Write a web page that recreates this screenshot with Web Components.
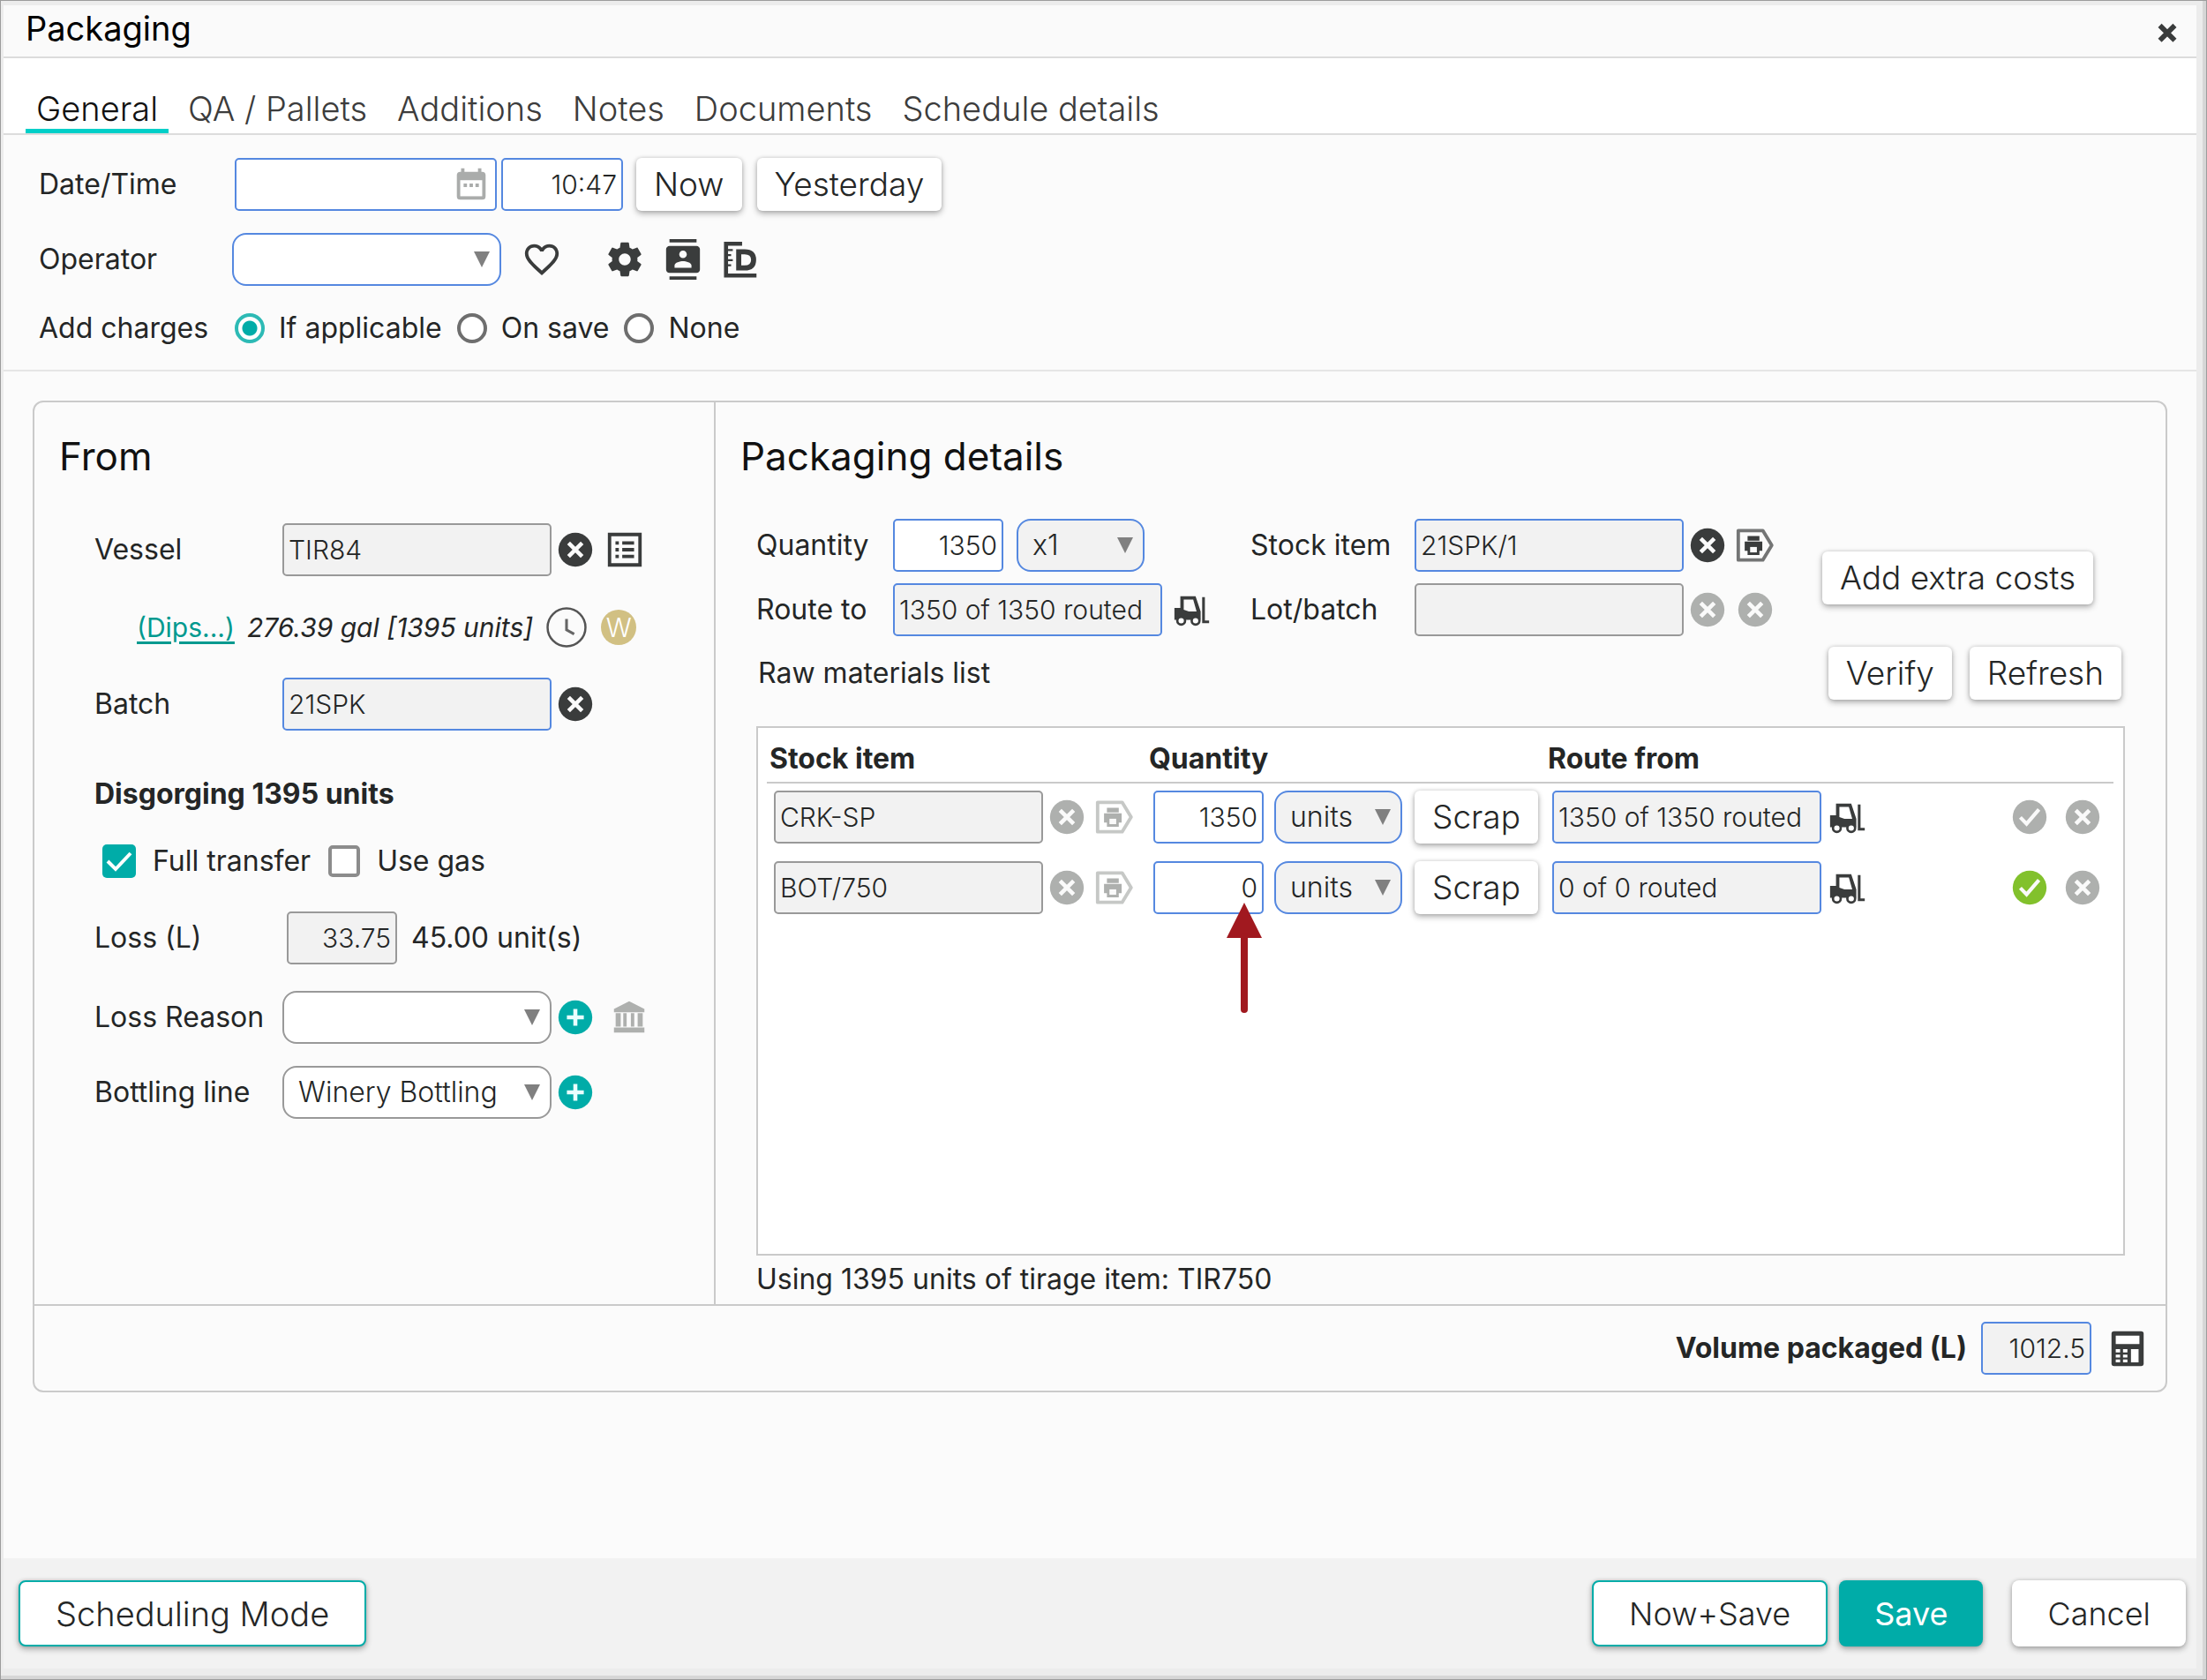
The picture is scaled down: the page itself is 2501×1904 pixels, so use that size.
<!DOCTYPE html>
<html lang="en">
<head>
<meta charset="utf-8">
<title>Packaging</title>
<style>
html, body { margin: 0; height: 100%; }
body { font-family: Inter, "Open Sans", sans-serif; font-size: 32px; line-height: 36px; color: #242626; background: #fbfbfb; }
</style>
</head>
<body>
<packaging-dialog></packaging-dialog>

<template id="t-dialog">
<style>
:host { display: flex; flex-direction: column; box-sizing: border-box; min-height: 100vh; border: 1px solid #9c9c9c; background: #ececec; padding: 5px 11px 12px 3px;
  box-shadow: inset -4px -4px 0 #d6d6d6; }
main { flex: 1; display: flex; flex-direction: column; background: #fbfbfb; }
header { display: flex; align-items: center; justify-content: space-between; height: 58px; padding: 0 10px 0 25px; background: #fafafa; border-bottom: 2px solid #dcdcdc; }
h1 { margin: 0; font-size: 38px; line-height: 44px; font-weight: 400; color: #000; padding-bottom: 6px; }
.top { display: flex; flex-direction: column; padding: 26px 40px 29px; border-bottom: 2px solid #e6e6e6; }
.row { display: flex; align-items: center; }
.g4 { gap: 4px; }
.box { margin: 33px 33px 0; border: 2px solid #cacaca; border-radius: 12px; }
.cols { display: grid; grid-template-columns: 772px 1fr; }
h2 { margin: 0; font-size: 44px; line-height: 48px; font-weight: 400; color: #111; }
.from { padding: 37px 0 0 28px; border-right: 2px solid #cacaca; }
.from .rows { padding: 52px 0 0 40px; display: flex; flex-direction: column; }
.dips { padding: 35px 0 34px 48px; display: flex; align-items: center; height: 46px; font-size: 30px; }
a { color: #00998f; text-decoration-thickness: 3px; text-underline-offset: 5px; }
i { margin: 0 15px 0 14px; }
.w { display: grid; place-items: center; width: 40px; height: 40px; margin-left: 16px; border-radius: 50%; background: #d1c083; color: #fff; font-weight: 300; }
h3 { margin: 0; font-size: 32px; line-height: 36px; font-weight: 700; }
.details { padding: 37px 46px 10px; }
.details h2 { margin-left: -18px; }
.grid { display: flex; gap: 43px; padding: 47px 0 12px; }
.stack { display: flex; flex-direction: column; gap: 13px; }
.raw { display: flex; justify-content: space-between; align-items: center; padding: 0 4px 30px 2px; }
.using { margin: 9px 0 0; }
.total { display: flex; align-items: center; justify-content: flex-end; gap: 18px; border-top: 2px solid #cacaca; padding: 18px 20px 18px 0; }
footer { display: flex; align-items: center; gap: 13px; height: 125px; margin-top: 188px; padding: 0 12px 0 17px; background: #f2f2f2; }
footer .push { margin-left: auto; }
.sp { width: 7px; }
.close { border: 0; background: none; padding: 0; height: 46px; }
</style>
<main>
  <header><h1>Packaging</h1><button class="close" aria-label="Close"><ui-icon name="close"></ui-icon></button></header>
  <tab-bar></tab-bar>
  <section class="top">
    <div class="row">
      <ui-field label="Date/Time" lw="222" w="297" icon="calendar"></ui-field>
      <ui-field aria="Time" value="10:47" w="138" right style="margin-left:5px"></ui-field>
      <ui-button style="margin-left:15px">Now</ui-button>
      <ui-button style="margin-left:17px">Yesterday</ui-button>
    </div>
    <div class="row" style="margin-top:25px">
      <ui-select label="Operator" lw="219" w="305"></ui-select>
      <ui-icon name="heart" style="margin-left:23px"></ui-icon>
      <ui-icon name="gear" style="margin-left:48px"></ui-icon>
      <ui-icon name="contacts" style="margin-left:20px"></ui-icon>
      <ui-icon name="ruler" style="margin-left:20px"></ui-icon>
    </div>
    <charge-options></charge-options>
  </section>
  <section class="box">
    <div class="cols">
      <div class="from">
        <h2>From</h2>
        <div class="rows">
          <div class="row g4"><ui-field label="Vessel" lw="213" w="305" value="TIR84" grey fill></ui-field><ui-icon name="cancel"></ui-icon><ui-icon name="list" style="margin-left:6px"></ui-icon></div>
          <div class="dips"><a href="#dips">(Dips...)</a><i>276.39 gal [1395 units]</i><ui-icon name="clock"></ui-icon><span class="w">W</span></div>
          <div class="row g4"><ui-field label="Batch" lw="213" w="305" value="21SPK" fill></ui-field><ui-icon name="cancel"></ui-icon></div>
          <h3 style="padding-top:54px">Disgorging 1395 units</h3>
          <div class="row" style="padding:39px 0 38px 9px"><ui-check label="Full transfer" checked></ui-check><ui-check label="Use gas" style="margin-left:20px"></ui-check></div>
          <div class="row" style="gap:16px"><ui-field label="Loss (L)" lw="218" w="125" value="33.75" grey fill right></ui-field><span>45.00 unit(s)</span></div>
          <div class="row g4" style="padding:30px 0 25px"><ui-select label="Loss Reason" lw="213" w="305" grey></ui-select><ui-icon name="plus"></ui-icon><ui-icon name="bank" tone="off" style="margin-left:11px"></ui-icon></div>
          <div class="row g4"><ui-select label="Bottling line" lw="213" w="305" value="Winery Bottling" grey></ui-select><ui-icon name="plus"></ui-icon></div>
        </div>
      </div>
      <div class="details">
        <h2>Packaging details</h2>
        <div class="grid">
          <div class="stack">
            <div class="row" style="gap:15px"><ui-field label="Quantity" lw="155" w="125" value="1350" right></ui-field><ui-select aria="Multiplier" w="145" value="x1" fill></ui-select></div>
            <div class="row" style="gap:11px"><ui-field label="Route to" lw="155" w="305" value="1350 of 1350 routed" fill></ui-field><ui-icon name="forklift"></ui-icon></div>
          </div>
          <div class="stack">
            <div class="row g4"><ui-field label="Stock item" lw="186" w="305" value="21SPK/1" fill></ui-field><ui-icon name="cancel"></ui-icon><ui-icon name="tag" style="margin-left:4px"></ui-icon></div>
            <div class="row g4"><ui-field label="Lot/batch" lw="186" w="305" grey fill></ui-field><ui-icon name="cancel" tone="off"></ui-icon><ui-icon name="cancel" tone="off" style="margin-left:4px"></ui-icon></div>
          </div>
          <div class="row" style="padding-left:10px"><ui-button>Add extra costs</ui-button></div>
        </div>
        <div class="raw"><span>Raw materials list</span><div class="row" style="gap:20px"><ui-button>Verify</ui-button><ui-button>Refresh</ui-button></div></div>
        <materials-table></materials-table>
        <p class="using">Using 1395 units of tirage item: TIR750</p>
      </div>
    </div>
    <div class="total"><ui-field label="Volume packaged (L)" bold w="125" gap="16" value="1012.5" right fill></ui-field><ui-icon name="calculator"></ui-icon></div>
  </section>
  <footer>
    <ui-button kind="outline" wide>Scheduling Mode</ui-button>
    <ui-button kind="outline" class="push">Now+Save</ui-button>
    <ui-button kind="primary">Save</ui-button>
    <span class="sp"></span>
    <ui-button kind="large">Cancel</ui-button>
  </footer>
</main>
</template>

<script>
const INK = '#3a3c3c', OFF = '#aeb0ae';
const ICONS = {
  close: '<path d="M7.600 8.800l8.800 8.800M16.400 8.800l-8.800 8.800" stroke="currentColor" stroke-width="3"/>',
  calendar: '<path fill="#aaacab" d="M6 2.500h2v2h8v-2h2v2h.5a2 2 0 0 1 2 2V19a2 2 0 0 1-2 2h-13a2 2 0 0 1-2-2V6.500a2 2 0 0 1 2-2H6z"/><path fill="#fff" d="M5.500 9.500h13V19h-13z"/><path fill="#aaacab" d="M7.500 11.500h2v2h-2zM11 11.500h2v2h-2zM14.500 11.500h2v2h-2z"/>',
  heart: '<path fill="currentColor" d="M16.500 3c-1.740 0-3.410.810-4.500 2.090C10.910 3.810 9.240 3 7.500 3 4.420 3 2 5.420 2 8.500c0 3.780 3.400 6.860 8.550 11.540L12 21.350l1.450-1.320C18.600 15.360 22 12.280 22 8.500 22 5.420 19.580 3 16.500 3zm-4.400 15.550l-.1.1-.1-.1C7.140 14.240 4 11.390 4 8.500 4 6.500 5.500 5 7.500 5c1.540 0 3.040.990 3.570 2.360h1.870C13.460 5.990 14.960 5 16.500 5c2 0 3.500 1.500 3.500 3.500 0 2.890-3.140 5.740-7.900 10.050z"/>',
  gear: '<path fill="currentColor" d="M19.430 12.980c.04-.32.07-.64.07-.98s-.03-.66-.07-.98l2.110-1.650c.19-.15.24-.42.12-.64l-2-3.460c-.12-.22-.39-.3-.61-.22l-2.490 1c-.52-.4-1.080-.73-1.690-.98l-.38-2.650C14.460 2.180 14.250 2 14 2h-4c-.25 0-.46.18-.49.42l-.38 2.650c-.61.25-1.170.59-1.690.98l-2.490-1c-.23-.09-.49 0-.61.22l-2 3.460c-.13.22-.07.49.12.64l2.110 1.650c-.04.32-.07.65-.07.98s.03.66.07.98l-2.110 1.650c-.19.15-.24.42-.12.64l2 3.460c.12.22.39.3.61.22l2.490-1c.52.4 1.080.73 1.690.98l.38 2.650c.03.24.24.42.49.42h4c.25 0 .46-.18.49-.42l.38-2.650c.61-.25 1.170-.59 1.690-.98l2.490 1c.23.09.49 0 .61-.22l2-3.460c.12-.22.07-.49-.12-.64l-2.110-1.650zM12 15.500c-1.930 0-3.500-1.570-3.500-3.500s1.570-3.500 3.500-3.500 3.500 1.570 3.500 3.500-1.570 3.500-3.500 3.500z"/>',
  contacts: '<path fill="currentColor" d="M20 0H4v2h16V0zM4 24h16v-2H4v2zM20 4H4c-1.100 0-2 .9-2 2v12c0 1.100.9 2 2 2h16c1.100 0 2-.9 2-2V6c0-1.100-.9-2-2-2zm-8 2.750c1.240 0 2.250 1.010 2.250 2.250s-1.010 2.250-2.250 2.250S9.750 10.240 9.750 9 10.760 6.750 12 6.750zM17 17H7v-1.500c0-1.670 3.330-2.500 5-2.500s5 .83 5 2.500V17z"/>',
  ruler: '<path fill="none" stroke="currentColor" stroke-width="2.400" d="M12.500 2.700H3v18.800h18"/><path fill="none" stroke="currentColor" stroke-width="1.200" d="M4 6.500h3M4 9.500h2M4 12.500h3M4 15.500h2"/><path fill="none" stroke="currentColor" stroke-width="3" d="M10.500 7.500H14c3.200 0 5.300 1.300 5.300 4.700S17.200 17 14 17h-3.500z"/>',
  cancel: '<circle cx="12" cy="12" r="10" fill="currentColor"/><path d="M8 8l8 8M16 8l-8 8" stroke="#fafafa" stroke-width="2.400"/>',
  check: '<circle cx="12" cy="12" r="10" fill="currentColor"/><path d="M6.500 12.200l3.700 3.800 7.300-8.500" fill="none" stroke="#fafafa" stroke-width="2.200"/>',
  plus: '<circle cx="12" cy="12" r="10" fill="#00aca8"/><path d="M12 7v10M7 12h10" stroke="#e9fffe" stroke-width="2.400"/>',
  list: '<path fill="none" stroke="currentColor" stroke-width="2" d="M3 3h18v18H3z"/><path stroke="currentColor" stroke-width="2" d="M6.500 8h2M6.500 12h2M6.500 16h2M10.500 8h7M10.500 12h7M10.500 16h7"/>',
  clock: '<circle cx="12" cy="12" r="11.200" fill="none" stroke="#555" stroke-width="1.300"/><path fill="none" stroke="#666" stroke-width="1.600" d="M12 7v6.500l4.500 2.500"/>',
  bank: '<path fill="currentColor" d="M4 9.500h3v8H4zM8.500 9.500h2v8h-2zM13 9.500h2v8h-2zM17 9.500h3v8h-3zM3 18h18v3H3zM12 2.500L3 7v2h18V7z"/>',
  forklift: '<path fill="currentColor" fill-rule="evenodd" d="M5 11V4h9l3 9v5H1.500v-7zm2-5v6l3 1h4.600L12.600 6z"/><circle cx="5.500" cy="18.500" r="2.300" fill="#fff" stroke="currentColor" stroke-width="1.400"/><circle cx="14" cy="18.500" r="2.300" fill="#fff" stroke="currentColor" stroke-width="1.400"/><path fill="none" stroke="currentColor" stroke-width="1.600" d="M18.700 4.500v14.700H22"/>',
  tag: '<path fill="none" stroke="currentColor" stroke-opacity=".7" stroke-width="2" stroke-linejoin="round" d="M2 3.300h14.500l5.300 8.700-5.300 8.700H2z"/><path fill="currentColor" d="M7.500 6.500h7v2.700h-7zM5.800 9.800h10.400v5.400h-1.700v2.500h-7v-2.500H5.800z"/><path fill="#fafafa" d="M9 13h4v3.200H9z"/>',
  calculator: '<rect x="2.500" y="2" width="19" height="20.500" rx="1.500" fill="currentColor"/><path fill="#fff" d="M5 4.500h14v5H5zM5 12.500h2.600v2H5zM9.300 12.500h2.600v2H9.300zM5 15.800h2.600v1.700H5zM9.300 15.800h2.600v1.700H9.300zM5 18.700h2.600v1.600H5zM9.300 18.700h2.600v1.600H9.300zM14 12.500h4.500v7.800H14z"/>'
};
const make = (host, css, html) => { host.attachShadow({ mode: 'open' }).innerHTML = `<style>${css}</style>${html}`; };
const attr = (el, n, d = '') => el.getAttribute(n) ?? d;

customElements.define('ui-icon', class extends HTMLElement {
  connectedCallback() {
    const tone = { off: OFF, good: '#82c12c' }[attr(this, 'tone')] || INK;
    make(this, `:host{display:block;flex:none;width:46px;height:46px;color:${tone}} svg{display:block;width:46px;height:46px}`,
      `<svg viewBox="0 0 24 24" aria-hidden="true">${ICONS[attr(this, 'name')]}</svg>`);
  }
});

customElements.define('ui-button', class extends HTMLElement {
  connectedCallback() {
    make(this, `
      :host{display:block;flex:none}
      button{display:block;box-sizing:border-box;height:60px;padding:0 20px;border:0;border-radius:6px;background:#fff;color:#242626;font:300 37px/44px Inter,"Open Sans",sans-serif;box-shadow:0 3px 7px rgba(0,0,0,.3),0 0 4px rgba(0,0,0,.14)}
      :host([kind]) button{height:75px;padding:0 40px;border-radius:8px;font-size:36px}
      :host([kind=outline]) button{border:2px solid #00aca8}
      :host([wide]) button{font-size:38px}
      :host([kind=primary]) button{background:#00aca8;color:#fff;font-weight:400}`,
      '<button type="button"><slot></slot></button>');
  }
});

const boxCss = `
  :host{display:flex;align-items:center;flex:none}
  .wrap{display:grid;align-items:center}
  .wrap>*{grid-area:1/1}
  input,select{box-sizing:border-box;height:60px;margin:0;border:2px solid #5588e0;border-radius:5px;background:#fff;color:#242626;font:300 30px/36px Inter,"Open Sans",sans-serif;outline:0}
  input{padding:0 5px}
  select{appearance:none;border-radius:16px;padding:0 34px 0 16px;font-size:32px}
  :host([grey]) input,:host([grey]) select{border-color:#999}
  :host([fill]) input,:host([fill]) select{background:#f2f2f2}
  :host([right]) input{text-align:right}
  :host([bold]) label{font-weight:700}
  ui-icon,svg{justify-self:end;pointer-events:none}`;
const labelHtml = el => {
  const lw = attr(el, 'lw');
  return el.hasAttribute('label') ? `<label for="c" style="${lw ? `width:${lw}px` : `margin-right:${attr(el, 'gap')}px`}">${attr(el, 'label')}</label>` : '';
};
customElements.define('ui-field', class extends HTMLElement {
  connectedCallback() {
    const aria = this.hasAttribute('aria') ? `aria-label="${attr(this, 'aria')}"` : '';
    make(this, boxCss, `${labelHtml(this)}<div class="wrap"><input id="c" type="text" ${aria} value="${attr(this, 'value')}" ${this.hasAttribute('fill') ? 'readonly' : ''} style="width:${attr(this, 'w')}px">${this.hasAttribute('icon') ? `<ui-icon name="${attr(this, 'icon')}" style="margin-right:6px"></ui-icon>` : ''}</div>`);
  }
});
customElements.define('ui-select', class extends HTMLElement {
  connectedCallback() {
    const aria = this.hasAttribute('aria') ? `aria-label="${attr(this, 'aria')}"` : '';
    make(this, boxCss + 'svg{width:18px;height:18px;margin-right:13px}', `${labelHtml(this)}<div class="wrap"><select id="c" ${aria} style="width:${attr(this, 'w')}px"><option>${attr(this, 'value')}</option></select><svg viewBox="0 0 18 18"><path fill="#808080" d="M0 0h18L9 18z"/></svg></div>`);
  }
});

customElements.define('ui-check', class extends HTMLElement {
  connectedCallback() {
    const on = this.hasAttribute('checked');
    make(this, `
      :host{display:block}
      label{display:flex;align-items:center;gap:19px}
      .wrap{display:grid;place-items:center;height:38px}
      .wrap>*{grid-area:1/1}
      input{appearance:none;box-sizing:border-box;margin:0;width:36px;height:36px;border:4px solid #8c8c8c;border-radius:5px;background:#fff}
      input:checked{width:38px;height:38px;border:0;background:#00aca8}
      svg{width:38px;height:38px;pointer-events:none}`,
      `<label><span class="wrap"><input type="checkbox" ${on ? 'checked' : ''}>${on ? '<svg viewBox="0 0 38 38"><path fill="none" stroke="#fff" stroke-width="4" d="M6 19l9 9L32 10"/></svg>' : ''}</span>${attr(this, 'label')}</label>`);
  }
});

customElements.define('charge-options', class extends HTMLElement {
  connectedCallback() {
    make(this, `
      :host{display:block}
      fieldset{display:flex;align-items:center;gap:17px;margin:0;border:0;padding:30px 0 0}
      .name{width:205px}
      label{display:flex;align-items:center;gap:16px}
      input{appearance:none;box-sizing:border-box;margin:0;width:34px;height:34px;border:4px solid #6e6e6e;border-radius:50%;background:#fff}
      input:checked{border-color:#2dbab5;background:radial-gradient(circle,#00aca8 0 8px,#fff 9px)}`,
      `<fieldset aria-label="Add charges"><span class="name">Add charges</span>
       <label><input type="radio" name="c" checked>If applicable</label>
       <label><input type="radio" name="c">On save</label>
       <label><input type="radio" name="c">None</label></fieldset>`);
  }
});

customElements.define('tab-bar', class extends HTMLElement {
  connectedCallback() {
    const tabs = ['General', 'QA / Pallets', 'Additions', 'Notes', 'Documents', 'Schedule details'];
    make(this, `
      :host{display:block;background:#fff;border-bottom:2px solid #dcdcdc}
      nav{display:flex;gap:10px;padding:35px 25px 0}
      button{border:0;border-bottom:5px solid transparent;background:none;padding:0 12px 1px;font:300 38px/44px Inter,"Open Sans",sans-serif;color:#3c3c3c}
      button.on{border-color:#00cfc8;color:#111}`,
      `<nav role="tablist">${tabs.map((t, i) => `<button role="tab" ${i ? '' : 'class="on"'}>${t}</button>`).join('')}</nav>`);
  }
});

customElements.define('materials-table', class extends HTMLElement {
  connectedCallback() {
    const rows = [['CRK-SP', '1350', '1350 of 1350 routed', 'off'], ['BOT/750', '0', '0 of 0 routed', 'good']];
    make(this, `
      :host{display:block;box-sizing:border-box;min-height:600px;border:2px solid #cacaca;background:#fff;padding:0 11px 0 10px}
      table{width:100%;border-collapse:separate;border-spacing:0;table-layout:fixed}
      th{text-align:left;font-weight:700;padding:17px 3px 8px;border-bottom:2px solid #cacaca;line-height:36px}
      td{padding:8px 0 12px 8px;height:60px}
      td div{display:flex;align-items:center}
      .c1{width:430px}.c2{width:452px}
      .end{justify-content:flex-end;gap:14px;padding-right:12px}
      .mark{position:relative}
      .mark svg{position:absolute;right:2px;top:78%;width:40px;height:126px}`,
      `<table><colgroup><col class="c1"><col class="c2"><col><col style="width:200px"></colgroup>
       <thead><tr><th>Stock item</th><th>Quantity</th><th>Route from</th><th></th></tr></thead><tbody>
       ${rows.map(([item, qty, route, tone], i) => `<tr>
        <td><div><ui-field aria="Stock item" w="305" value="${item}" grey fill></ui-field><ui-icon name="cancel" tone="off" style="margin-left:4px"></ui-icon><ui-icon name="tag" tone="off" style="margin-left:8px"></ui-icon></div></td>
        <td><div><span class="mark"><ui-field aria="Quantity" w="125" value="${qty}" right></ui-field>${i ? '<svg viewBox="0 0 40 126"><path fill="#a1191f" d="M20 0l20 40H0z"/><path stroke="#a1191f" stroke-width="8" stroke-linecap="round" d="M20 38v83"/></svg>' : ''}</span><ui-select aria="Unit" w="145" value="units" fill style="margin-left:12px"></ui-select><ui-button style="margin-left:14px">Scrap</ui-button></div></td>
        <td><div><ui-field aria="Route from" w="305" value="${route}" fill></ui-field><ui-icon name="forklift" style="margin-left:7px"></ui-icon></div></td>
        <td><div class="end"><ui-icon name="check" tone="${tone}"></ui-icon><ui-icon name="cancel" tone="off"></ui-icon></div></td></tr>`).join('')}
       </tbody></table>`);
  }
});

customElements.define('packaging-dialog', class extends HTMLElement {
  connectedCallback() {
    this.attachShadow({ mode: 'open' }).append(document.getElementById('t-dialog').content.cloneNode(true));
  }
});
</script>
</body>
</html>
